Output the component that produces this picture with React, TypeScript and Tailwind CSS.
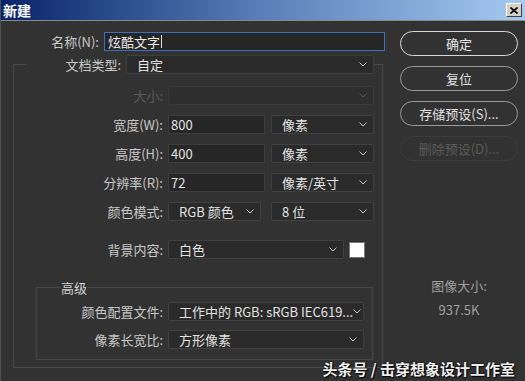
import React from "react";

const FONT = { fontFamily: '"Noto Sans CJK SC", "Noto Sans", sans-serif' };

function Chevron({ dim }: { dim?: boolean }) {
  return (
    <svg width="8" height="5" viewBox="0 0 8 5" className="shrink-0">
      <polyline
        points="0.5,0.5 4,4 7.5,0.5"
        fill="none"
        stroke={dim ? "#555555" : "#c8c8c8"}
        strokeWidth="1"
      />
    </svg>
  );
}

function Select({ w, text, dim }: { w: string; text?: string; dim?: boolean }) {
  return (
    <div
      className={`${w} h-[19px] shrink-0 flex items-center justify-between pl-[10px] pr-[6px] rounded-[2px] border ${
        dim ? "border-[#393939] bg-[#2e2e2e]" : "border-[#404040] bg-[#2a2a2a]"
      } text-[13px] leading-[17px] text-[#e2e2e2]`}
    >
      <span className="whitespace-nowrap">{text}</span>
      <Chevron dim={dim} />
    </div>
  );
}

function Input({ w, text }: { w: string; text: string }) {
  return (
    <div className={`${w} h-[19px] shrink-0 flex items-center pl-[2px] border border-[#3d3d3d] bg-[#262626] text-[13px] leading-[17px] text-[#e2e2e2]`}>
      {text}
    </div>
  );
}

function Label({ w, children, dim }: { w: string; children: React.ReactNode; dim?: boolean }) {
  return (
    <div
      className={`${w} shrink-0 text-right text-[13px] leading-[17px] whitespace-nowrap ${
        dim ? "text-[#5a5a5a]" : "text-[#c8c8c8]"
      }`}
    >
      {children}
    </div>
  );
}

function Btn({ children, kind }: { children: React.ReactNode; kind?: "def" | "dis" }) {
  const cls =
    kind === "def"
      ? "border-[#d8d8d8] text-[#e8e8e8]"
      : kind === "dis"
      ? "border-[#3c3c3c] text-[#5a5a5a]"
      : "border-[#9a9a9a] text-[#e0e0e0]";
  return (
    <div className={`w-[118px] h-[25px] rounded-full border ${cls} flex items-center justify-center text-[13px] leading-[17px]`}>
      {children}
    </div>
  );
}

export default function App() {
  return (
    <div className="w-[525px] h-[381px] bg-[#323232] relative overflow-hidden border-l border-[#4e4e4e]" style={FONT}>
      {/* title bar */}
      <div className="h-[20px] flex items-center justify-between bg-gradient-to-r from-[#0a246a] via-[#5a7fb8] to-[#a6caf0] pl-[2px] pr-[3px]">
        <span className="text-white font-bold text-[14px] leading-[18px]">新建</span>
        <div className="w-[16px] h-[14px] bg-[#d4d0c8] border border-t-white border-l-white border-r-[#404040] border-b-[#404040] flex items-center justify-center">
          <svg width="8" height="7" viewBox="0 0 8 7">
            <path d="M0.5 0.5 L7.5 6.5 M7.5 0.5 L0.5 6.5" stroke="#000" strokeWidth="1.6" />
          </svg>
        </div>
      </div>
      <div className="h-[1px] bg-[#8a8a8a]" />

      <div className="flex">
        {/* left column */}
        <div className="w-[390px] shrink-0">
          <div className="mt-[11px] flex items-center h-[19px]">
            <Label w="w-[98px]">名称(N):</Label>
            <div className="ml-[5px] w-[281px] h-[19px] flex items-center pl-[3px] border border-[#3b6fc0] bg-[#262626] text-[13px] leading-[17px] text-[#ececec]">
              炫酷文字<span className="ml-[1px] w-px h-[13px] bg-[#e0e0e0]" />
            </div>
          </div>

          <fieldset className="mt-[4px] ml-[12px] w-[370px] border border-[#4a4a4a] pb-[7px]">
            <legend className="ml-[12px]">
              <div className="flex items-center h-[19px]">
                <Label w="w-[95px]">文档类型:</Label>
                <div className="ml-[5px]">
                  <Select w="w-[248px]" text="自定" />
                </div>
              </div>
            </legend>

            <div className="mt-[12px] flex flex-col gap-[10px]">
              <div className="flex items-center h-[19px]">
                <Label w="w-[149px]" dim>大小:</Label>
                <div className="ml-[5px]">
                  <Select w="w-[206px]" dim />
                </div>
              </div>
              <div className="flex items-center h-[19px]">
                <Label w="w-[149px]">宽度(W):</Label>
                <div className="ml-[5px] flex gap-[6px]">
                  <Input w="w-[97px]" text="800" />
                  <Select w="w-[103px]" text="像素" />
                </div>
              </div>
              <div className="flex items-center h-[19px]">
                <Label w="w-[149px]">高度(H):</Label>
                <div className="ml-[5px] flex gap-[6px]">
                  <Input w="w-[97px]" text="400" />
                  <Select w="w-[103px]" text="像素" />
                </div>
              </div>
              <div className="flex items-center h-[19px]">
                <Label w="w-[149px]">分辨率(R):</Label>
                <div className="ml-[5px] flex gap-[6px]">
                  <Input w="w-[97px]" text="72" />
                  <Select w="w-[103px]" text="像素/英寸" />
                </div>
              </div>
              <div className="flex items-center h-[19px]">
                <Label w="w-[149px]">颜色模式:</Label>
                <div className="ml-[5px] flex gap-[10px]">
                  <Select w="w-[93px]" text="RGB 颜色" />
                  <Select w="w-[103px]" text="8 位" />
                </div>
              </div>
            </div>

            <div className="mt-[19px] flex items-center h-[19px]">
              <Label w="w-[149px]">背景内容:</Label>
              <div className="ml-[5px] flex items-center gap-[5px]">
                <Select w="w-[176px]" text="白色" />
                <div className="w-[16px] h-[16px] bg-white border border-[#777]" />
              </div>
            </div>

            <fieldset className="mt-[19px] ml-[22px] w-[337px] border border-[#464646] pb-[10px]">
              <legend className="ml-[23px] px-[1px] h-[18px] flex items-center text-[13px] leading-[17px] text-[#d2d2d2]">
                高级
              </legend>
              <div className="mt-[6px] flex flex-col gap-[9px]">
                <div className="flex items-center h-[19px]">
                  <Label w="w-[126px]">颜色配置文件:</Label>
                  <div className="ml-[5px]">
                    <Select w="w-[196px]" text="工作中的 RGB: sRGB IEC619..." />
                  </div>
                </div>
                <div className="flex items-center h-[19px]">
                  <Label w="w-[126px]">像素长宽比:</Label>
                  <div className="ml-[5px]">
                    <Select w="w-[196px]" text="方形像素" />
                  </div>
                </div>
              </div>
            </fieldset>
          </fieldset>
        </div>

        {/* right column */}
        <div className="flex-1 pl-[9px] flex flex-col">
          <div className="mt-[10px] flex flex-col gap-[10px]">
            <Btn kind="def">确定</Btn>
            <Btn>复位</Btn>
            <Btn>存储预设(S)...</Btn>
            <Btn kind="dis">删除预设(D)...</Btn>
          </div>
          <div className="w-[118px] mt-[116px] text-center text-[13px] leading-[17px] text-[#9e9e9e]">图像大小:</div>
          <div className="w-[118px] mt-[7px] text-center text-[13px] leading-[17px] text-[#9e9e9e]">937.5K</div>
        </div>
      </div>

      <div
        className="absolute right-[10px] bottom-[2px] text-[15px] font-bold leading-[20px] text-[#efefef] whitespace-nowrap"
        style={{ textShadow: "0 0 2px #000, 1px 1px 1px #000" }}
      >
        头条号 / 击穿想象设计工作室
      </div>
    </div>
  );
}
